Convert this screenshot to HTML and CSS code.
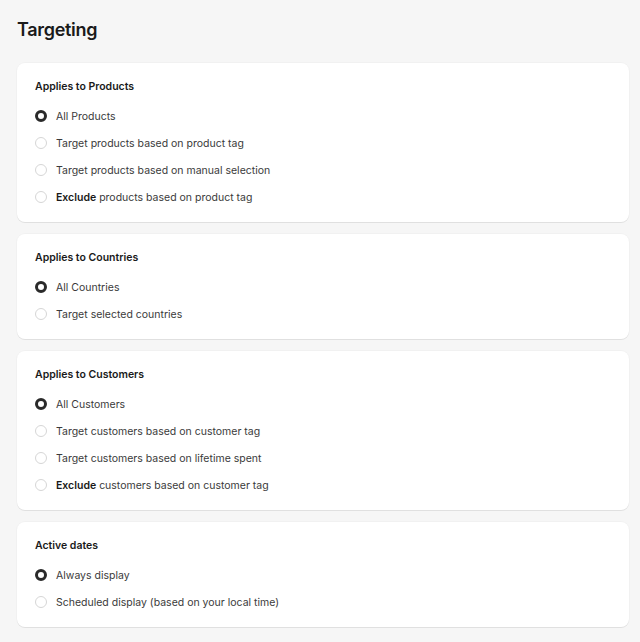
FILE: index.html
```html
<!DOCTYPE html>
<html lang="en">
<head>
<meta charset="utf-8">
<title>Targeting</title>
<link rel="stylesheet" href="styles.css">
</head>
<body>
<main class="page">
  <h1 class="page-title">Targeting</h1>

  <section class="card">
    <h2 class="card-title">Applies to Products</h2>
    <div class="options">
      <label class="option"><span class="radio is-checked"></span><span>All Products</span></label>
      <label class="option"><span class="radio"></span><span>Target products based on product tag</span></label>
      <label class="option"><span class="radio"></span><span>Target products based on manual selection</span></label>
      <label class="option"><span class="radio"></span><span><b>Exclude</b> products based on product tag</span></label>
    </div>
  </section>

  <section class="card">
    <h2 class="card-title">Applies to Countries</h2>
    <div class="options">
      <label class="option"><span class="radio is-checked"></span><span>All Countries</span></label>
      <label class="option"><span class="radio"></span><span>Target selected countries</span></label>
    </div>
  </section>

  <section class="card">
    <h2 class="card-title">Applies to Customers</h2>
    <div class="options">
      <label class="option"><span class="radio is-checked"></span><span>All Customers</span></label>
      <label class="option"><span class="radio"></span><span>Target customers based on customer tag</span></label>
      <label class="option"><span class="radio"></span><span>Target customers based on lifetime spent</span></label>
      <label class="option"><span class="radio"></span><span><b>Exclude</b> customers based on customer tag</span></label>
    </div>
  </section>

  <section class="card">
    <h2 class="card-title">Active dates</h2>
    <div class="options">
      <label class="option"><span class="radio is-checked"></span><span>Always display</span></label>
      <label class="option"><span class="radio"></span><span>Scheduled display (based on your local time)</span></label>
    </div>
  </section>
</main>
</body>
</html>
```

FILE: styles.css
```css
* { box-sizing: border-box; }

html, body {
  margin: 0;
  background: #f6f6f6;
}

body {
  font-family: Inter, "Noto Sans", sans-serif;
  color: #303030;
}

.page {
  display: flex;
  flex-direction: column;
  gap: 12px;
  padding: 18px 11px 16px 17px;
}

.page-title {
  margin: 0 0 9px;
  font-size: 18px;
  line-height: 24px;
  font-weight: 600;
  color: #1a1a1a;
  letter-spacing: -0.3px;
}

.card {
  background: #fff;
  border-radius: 8px;
  box-shadow: 0 1px 0 rgba(0, 0, 0, 0.07), 0 0 0 1px rgba(0, 0, 0, 0.02);
  padding: 16px 18px 15px;
  display: flex;
  flex-direction: column;
  gap: 11px;
}

.card-title {
  margin: 0;
  font-size: 10.5px;
  line-height: 16px;
  font-weight: 600;
  color: #1a1a1a;
}

.options {
  display: flex;
  flex-direction: column;
  gap: 7px;
}

.option {
  display: flex;
  align-items: center;
  gap: 9px;
  height: 20px;
  font-size: 10.5px;
  color: #3a3a3a;
}

.option b {
  font-weight: 600;
  color: #1a1a1a;
}

.radio {
  flex: none;
  width: 12px;
  height: 12px;
  border-radius: 50%;
  border: 1px solid #d6d6d6;
  background: #fff;
}

.radio.is-checked {
  border: 3.5px solid #2a2a2a;
}
```
